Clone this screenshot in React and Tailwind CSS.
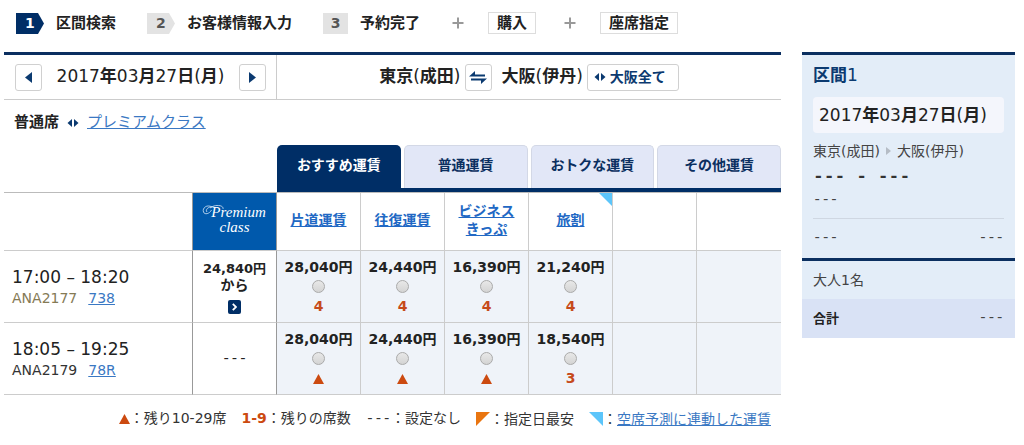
import React from "react";

const flights = [
  {
    time: "17:00 – 18:20",
    number: "ANA2177",
    numberColor: "text-[#857a55]",
    plane: "738",
    premium: "24,840円",
    fares: [
      { price: "28,040円", seats: "4" },
      { price: "24,440円", seats: "4" },
      { price: "16,390円", seats: "4" },
      { price: "21,240円", seats: "4" },
    ],
  },
  {
    time: "18:05 – 19:25",
    number: "ANA2179",
    numberColor: "text-[#333]",
    plane: "78R",
    premium: null,
    fares: [
      { price: "28,040円", seats: "▲" },
      { price: "24,440円", seats: "▲" },
      { price: "16,390円", seats: "▲" },
      { price: "18,540円", seats: "3" },
    ],
  },
];

function Dashes() {
  return <span className="font-['Liberation_Mono',monospace]">---</span>;
}

function TravelDate() {
  return (
    <>
      2017<b>年</b>03<b>月</b>27<b>日</b>(<b>月</b>)
    </>
  );
}

function UpTriangle() {
  return (
    <svg className="inline-block w-[11px] h-[10px]" viewBox="0 0 11 10" role="img" aria-label="▲">
      <path d="M5.5 0L11 10H0z" fill="#cc4a10" />
    </svg>
  );
}

function LeftRight() {
  return (
    <svg className="w-3 h-2 shrink-0" viewBox="0 0 12 8" fill="#0b3a70" aria-hidden="true">
      <path d="M5 0v8L0.5 4zM7 0v8l4.5-4z" />
    </svg>
  );
}

function StepBadge({ number, active }) {
  return (
    <span className={"relative w-7 h-[21px] leading-[21px] pl-[9px] font-bold text-sm " + (active ? "text-white" : "text-[#555]")}>
      <svg className="absolute inset-0 w-7 h-[21px]" viewBox="0 0 28 21" aria-hidden="true">
        <path d="M0 0h22l6 10.5L22 21H0z" fill={active ? "#002e66" : "#e3e3e3"} />
      </svg>
      <span className="relative">{number}</span>
    </span>
  );
}

function Plus() {
  return (
    <svg className="w-3 h-3" viewBox="0 0 12 12" stroke="#999" strokeWidth="2" aria-hidden="true">
      <path d="M6 0.5v11M0.5 6h11" />
    </svg>
  );
}

function Steps() {
  return (
    <ol className="flex items-center pl-3 h-[46px] text-[15px] font-bold">
      <li className="flex items-center gap-3">
        <StepBadge number="1" active />
        <span>区間検索</span>
      </li>
      <li className="flex items-center gap-3 ml-[31px]">
        <StepBadge number="2" />
        <span>お客様情報入力</span>
      </li>
      <li className="flex items-center gap-3 ml-[31px]">
        <span className="w-[25px] h-[21px] leading-[21px] bg-[#e3e3e3] text-[#555] text-center text-sm">3</span>
        <span>予約完了</span>
      </li>
      <li className="flex items-center gap-6 ml-8">
        <Plus />
        <span className="border border-[#ddd] px-2 leading-5">購入</span>
      </li>
      <li className="flex items-center gap-6 ml-7">
        <Plus />
        <span className="border border-[#ddd] px-2 leading-5">座席指定</span>
      </li>
    </ol>
  );
}

function SearchBar() {
  const square = "w-[27px] h-[27px] shrink-0 flex items-center justify-center rounded-[3px] border border-[#d0d0d0] bg-white";
  return (
    <div className="flex border-t-3 border-[#0b2f60] h-[48px]">
      <div className="w-[273px] flex items-center justify-between pl-[11px] pr-2.5 border-r border-b border-[#ccc]">
        <button className={square} aria-label="前日">
          <svg className="w-[7px] h-[11px]" viewBox="0 0 7 11" aria-hidden="true">
            <path d="M7 0v11L0 5.5z" fill="#0b3a70" />
          </svg>
        </button>
        <p className="text-[17px]"><TravelDate /></p>
        <button className={square} aria-label="翌日">
          <svg className="w-[7px] h-[11px]" viewBox="0 0 7 11" aria-hidden="true">
            <path d="M0 0v11l7-5.5z" fill="#0b3a70" />
          </svg>
        </button>
      </div>
      <div className="flex-1 flex items-center justify-center text-[17px] border-b border-[#ccc]">
        <span><b>東京</b>(<b>成田</b>)</span>
        <button className={square + " ml-1 mr-2.5"} aria-label="出発地と到着地を入れ替え">
          <svg className="w-[18px] h-[13px]" viewBox="0 0 18 13" fill="#0b3a70" aria-hidden="true">
            <path d="M0 5.5L6 0v3.5h10v2zM18 7.5L12 13V9.5H2v-2z" />
          </svg>
        </button>
        <span><b>大阪</b>(<b>伊丹</b>)</span>
        <button className="ml-1 h-[27px] px-1.5 pr-3 flex items-center gap-1 rounded-[3px] border border-[#d0d0d0] text-sm font-bold text-[#0b3a70]">
          <LeftRight />
          大阪全て
        </button>
      </div>
    </div>
  );
}

function Tabs() {
  const tab = "h-[43px] pb-1 rounded-t-[5px] text-sm font-bold";
  return (
    <div className="pl-[273px]">
      <div className="grid grid-cols-4 gap-[3px] border-b-4 border-[#002e66]">
        <button className={tab + " bg-[#002e66] text-white"}>おすすめ運賃</button>
        <button className={tab + " bg-[#e2e7f7] text-[#0b2f60] border border-b-0 border-[#d3d8e6]"}>普通運賃</button>
        <button className={tab + " bg-[#e2e7f7] text-[#0b2f60] border border-b-0 border-[#d3d8e6]"}>おトクな運賃</button>
        <button className={tab + " bg-[#e2e7f7] text-[#0b2f60] border border-b-0 border-[#d3d8e6]"}>その他運賃</button>
      </div>
    </div>
  );
}

function PremiumLogo() {
  return (
    <div className="relative pb-1 font-['Liberation_Serif',serif] italic text-[15px] leading-[15px] font-normal text-white">
      <svg className="absolute left-[9px] top-0 w-6 h-4" viewBox="0 0 24 16" fill="none" stroke="#d5e6f7" strokeWidth="0.8" aria-hidden="true">
        <path d="M10 2C5-1 0 3 1.5 7c1 3 6 2 8-2M12 2C6 1 3 5 5 7M8 3c5-4 14-3 13 1" />
      </svg>
      <p className="pl-2">Premium</p>
      <p>class</p>
    </div>
  );
}

function FareTable() {
  const head = "pb-1 border-b border-r border-[#ccc] text-sm leading-[18px] font-bold";
  return (
    <table className="w-full table-fixed border-separate border-spacing-0 border-t border-[#bbb]">
      <thead>
        <tr className="h-[58px]">
          <th className="w-[189px] border-b border-r border-b-[#ccc] border-r-[#999]" aria-label="便"></th>
          <th className="p-0 bg-[#0059ac] border-b border-r border-b-[#ccc] border-r-[#999]">
            <PremiumLogo />
          </th>
          <th className={head}><a href="#" className="text-[#2168c4] underline">片道運賃</a></th>
          <th className={head}><a href="#" className="text-[#2168c4] underline">往復運賃</a></th>
          <th className={head}><a href="#" className="text-[#2168c4] underline">ビジネス<br />きっぷ</a></th>
          <th className={head + " relative"}>
            <svg className="absolute top-0 right-0 w-[13px] h-[13px]" viewBox="0 0 13 13" aria-hidden="true">
              <path d="M0 0h13v13z" fill="#5cc5fa" />
            </svg>
            <a href="#" className="text-[#2168c4] underline">旅割</a>
          </th>
          <th className={head}></th>
          <th className="border-b border-[#ccc]"></th>
        </tr>
      </thead>
      <tbody>
        {flights.map((flight) => (
          <tr key={flight.number} className="h-[72px]">
            <td className="pl-2 border-b border-r border-b-[#ccc] border-r-[#999]">
              <p className="text-[17px] leading-[22px]">{flight.time}</p>
              <p className="text-sm leading-5">
                <span className={flight.numberColor}>{flight.number}</span>
                <a href="#" className="ml-[11px] text-[#3a78c3] underline">{flight.plane}</a>
              </p>
            </td>
            <td className="border-b border-r border-b-[#ccc] border-r-[#999] text-center text-sm">
              {flight.premium ? (
                <div className="flex flex-col items-center leading-[17px]">
                  <p className="font-bold text-[13px]">{flight.premium}</p>
                  <p className="font-bold">から</p>
                  <button className="mt-1.5 w-[13px] h-[14px] rounded-[2px] bg-[#002e66] flex items-center justify-center" aria-label="プレミアムクラスを選択">
                    <svg className="w-[5px] h-2" viewBox="0 0 5 8" fill="none" stroke="#fff" strokeWidth="1.8" aria-hidden="true">
                      <path d="M0.8 0.8L4 4 0.8 7.2" />
                    </svg>
                  </button>
                </div>
              ) : (
                <Dashes />
              )}
            </td>
            {flight.fares.map((fare, i) => (
              <td key={i} className="bg-[#eff3f9] border-b border-r border-[#ccc]">
                <label className="flex flex-col items-center text-sm leading-5 font-bold">
                  <span>{fare.price}</span>
                  <input
                    type="radio"
                    name="fare"
                    className="appearance-none w-[13px] h-[13px] my-[3px] rounded-full border border-[#aaa] bg-linear-to-b from-[#e8e8e8] to-[#d4d4d4]"
                  />
                  <span className="text-[#c64a1b]">{fare.seats === "▲" ? <UpTriangle /> : fare.seats}</span>
                </label>
              </td>
            ))}
            <td className="bg-[#eff3f9] border-b border-r border-[#ccc]"></td>
            <td className="bg-[#eff3f9] border-b border-[#ccc]"></td>
          </tr>
        ))}
      </tbody>
    </table>
  );
}

function Legend() {
  return (
    <ul className="flex justify-end gap-[15px] pr-2.5 pt-3 text-sm leading-[22px] text-[#333] whitespace-nowrap">
      <li><UpTriangle />：残り10-29席</li>
      <li><span className="font-bold text-[#cc4a10]">1-9</span>：残りの席数</li>
      <li><Dashes />：設定なし</li>
      <li className="flex items-center">
        <svg className="w-[14px] h-[14px]" viewBox="0 0 14 14" aria-hidden="true">
          <path d="M0 0h14L0 14z" fill="#e97510" />
        </svg>
        ：指定日最安
      </li>
      <li className="flex items-center">
        <svg className="w-[14px] h-[14px]" viewBox="0 0 14 14" aria-hidden="true">
          <path d="M0 0h14v14z" fill="#5cc5fa" />
        </svg>
        ：<a href="#" className="text-[#3a78c3] underline">空席予測に連動した運賃</a>
      </li>
    </ul>
  );
}

function Summary() {
  return (
    <aside className="w-[213px] shrink-0 self-start bg-[#e3edf8] border-t-3 border-[#0b2f60] text-sm text-[#444]">
      <div className="px-[11px] pt-2">
        <h2 className="text-[17px] leading-6 text-[#0b3a70]"><b>区間</b>1</h2>
        <p className="mt-2.5 h-9 leading-9 pl-1.5 rounded bg-[#f4f6fc] text-[17px] text-[#222] whitespace-nowrap"><TravelDate /></p>
        <p className="mt-2 leading-5 flex items-center">
          東京(成田)
          <svg className="w-[5px] h-2 mx-1.5" viewBox="0 0 5 8" aria-hidden="true">
            <path d="M0 0l5 4-5 4z" fill="#b5bcc5" />
          </svg>
          大阪(伊丹)
        </p>
        <p className="mt-1 leading-6 text-lg font-bold text-[#333] font-['Liberation_Mono',monospace]">--- - ---</p>
        <p className="leading-5"><Dashes /></p>
        <p className="mt-2 py-2.5 leading-[19px] border-t border-[#cfd7e2] flex justify-between">
          <Dashes />
          <Dashes />
        </p>
      </div>
      <p className="border-t-3 border-[#0b2f60] px-[11px] leading-[38px]">大人1名</p>
      <p className="bg-[#d9e2f5] px-[11px] leading-[39px] flex justify-between">
        <span className="font-bold text-[13px] text-[#222]">合計</span>
        <Dashes />
      </p>
    </aside>
  );
}

export default function App() {
  return (
    <div className="bg-white pl-1 pr-[9px] text-[#222] font-['DejaVu_Sans','Noto_Sans_CJK_JP',sans-serif]">
      <Steps />
      <div className="flex gap-[21px] pt-1.5">
        <main className="flex-1 min-w-0">
          <SearchBar />
          <div className="flex items-center h-[45px] pl-2.5 gap-2 text-[15px]">
            <span className="font-bold">普通席</span>
            <LeftRight />
            <a href="#" className="text-[#3a78c3] underline">プレミアムクラス</a>
          </div>
          <Tabs />
          <FareTable />
          <Legend />
        </main>
        <Summary />
      </div>
    </div>
  );
}
